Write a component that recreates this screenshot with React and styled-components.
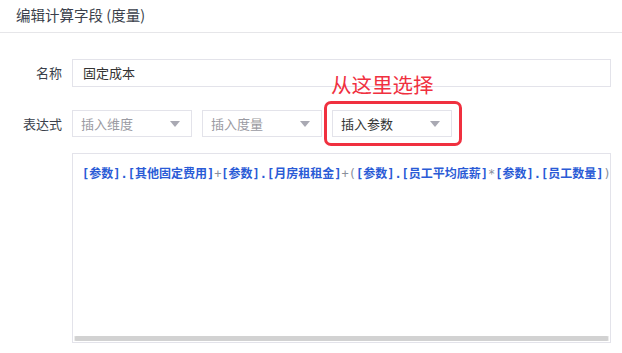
import React from "react";
import styled, { createGlobalStyle } from "styled-components";

const Global = createGlobalStyle`
  html, body { margin: 0; padding: 0; background: #fff; }
  body { font-family: "Noto Sans CJK SC", "Noto Sans", sans-serif; color: #333; }
`;

const Page = styled.div`
  width: 622px;
  height: 353px;
  overflow: hidden;
  background: #fff;
`;

const Header = styled.div`
  height: 33px;
  box-sizing: border-box;
  padding: 5px 0 0 16px;
  font-size: 14.5px;
  line-height: 20px;
  color: #3a3f4b;
  border-bottom: 1px solid #e6e6e9;
`;

const Body = styled.div`
  display: flex;
  flex-direction: column;
  padding: 26px 11px 0 0;
`;

const Row = styled.div`
  display: flex;
  align-items: center;
  margin-top: ${(p) => p.$mt || 0}px;
`;

const Label = styled.div`
  width: 62px;
  flex: none;
  text-align: right;
  padding-right: 10px;
  font-size: 13px;
  color: #3a3f4b;
  line-height: 20px;
`;

const Input = styled.div`
  flex: 1;
  height: 28px;
  box-sizing: border-box;
  border: 1px solid #e3e3ea;
  padding: 0 10px;
  font-size: 13px;
  line-height: 26px;
  color: #333;
`;

const SelectRow = styled.div`
  position: relative;
  display: flex;
  gap: 10px;
`;

const Select = styled.div`
  width: 120px;
  height: 27px;
  box-sizing: border-box;
  border: 1px solid #e3e3ea;
  display: flex;
  align-items: center;
  justify-content: space-between;
  padding: 0 11px 0 8px;
  font-size: 13px;
  color: ${(p) => (p.$active ? "#333" : "#9a9aa2")};
`;

const Caret = styled.span`
  width: 0;
  height: 0;
  border-left: 5px solid transparent;
  border-right: 5px solid transparent;
  border-top: 6px solid #a9a9b3;
`;

const Highlight = styled.div`
  position: absolute;
  left: 252px;
  top: -9px;
  width: 138px;
  height: 45px;
  box-sizing: border-box;
  border: 3px solid #f0303f;
  border-radius: 7px;
  pointer-events: none;
`;

const Hint = styled.div`
  position: absolute;
  left: 259px;
  top: -39px;
  font-size: 20.5px;
  line-height: 26px;
  color: #f0303f;
  white-space: nowrap;
`;

const Editor = styled.div`
  margin-left: 72px;
  margin-top: 16px;
  height: 190px;
  box-sizing: border-box;
  border: 1px solid #e3e3ea;
  display: flex;
  flex-direction: column;
  overflow: hidden;
`;

const Content = styled.div`
  flex: 1;
  overflow: hidden;
  padding: 5px 0 0 9px;
`;

const ScrollTrack = styled.div`
  height: 5px;
  margin: 0 1px 1px 1px;
  background: #ececec;
  display: flex;
  padding: 0 1px;
`;

const ScrollThumb = styled.div`
  flex: 1;
  background: #d2d2d2;
  border-radius: 1px;
`;

const Expr = styled.div`
  white-space: nowrap;
  font-family: "DejaVu Sans Mono", "Noto Sans CJK SC", monospace;
  font-size: 12px;
  line-height: 18px;
  display: inline-block;
`;

const Tok = styled.span`
  color: ${(p) => (p.$op ? "#8a8f9c" : "#2a5bd6")};
  font-weight: ${(p) => (p.$op ? 400 : 600)};
`;

const tokens = [
  ["[参数].[其他固定费用]"],
  ["+", 1],
  ["[参数].[月房租租金]"],
  ["+(", 1],
  ["[参数].[员工平均底薪]"],
  ["*", 1],
  ["[参数].[员工数量]"],
  [")", 1],
];

export default function App() {
  return (
    <Page>
      <Global />
      <Header>编辑计算字段 (度量)</Header>
      <Body>
        <Row>
          <Label>名称</Label>
          <Input>固定成本</Input>
        </Row>
        <Row $mt={23}>
          <Label>表达式</Label>
          <SelectRow>
            <Select>插入维度<Caret /></Select>
            <Select>插入度量<Caret /></Select>
            <Select $active>插入参数<Caret /></Select>
            <Highlight />
            <Hint>从这里选择</Hint>
          </SelectRow>
        </Row>
        <Editor>
          <Content>
            <Expr>
              {tokens.map(([t, op], i) => (
                <Tok key={i} $op={op}>{t}</Tok>
              ))}
            </Expr>
          </Content>
          <ScrollTrack>
            <ScrollThumb />
          </ScrollTrack>
        </Editor>
      </Body>
    </Page>
  );
}
